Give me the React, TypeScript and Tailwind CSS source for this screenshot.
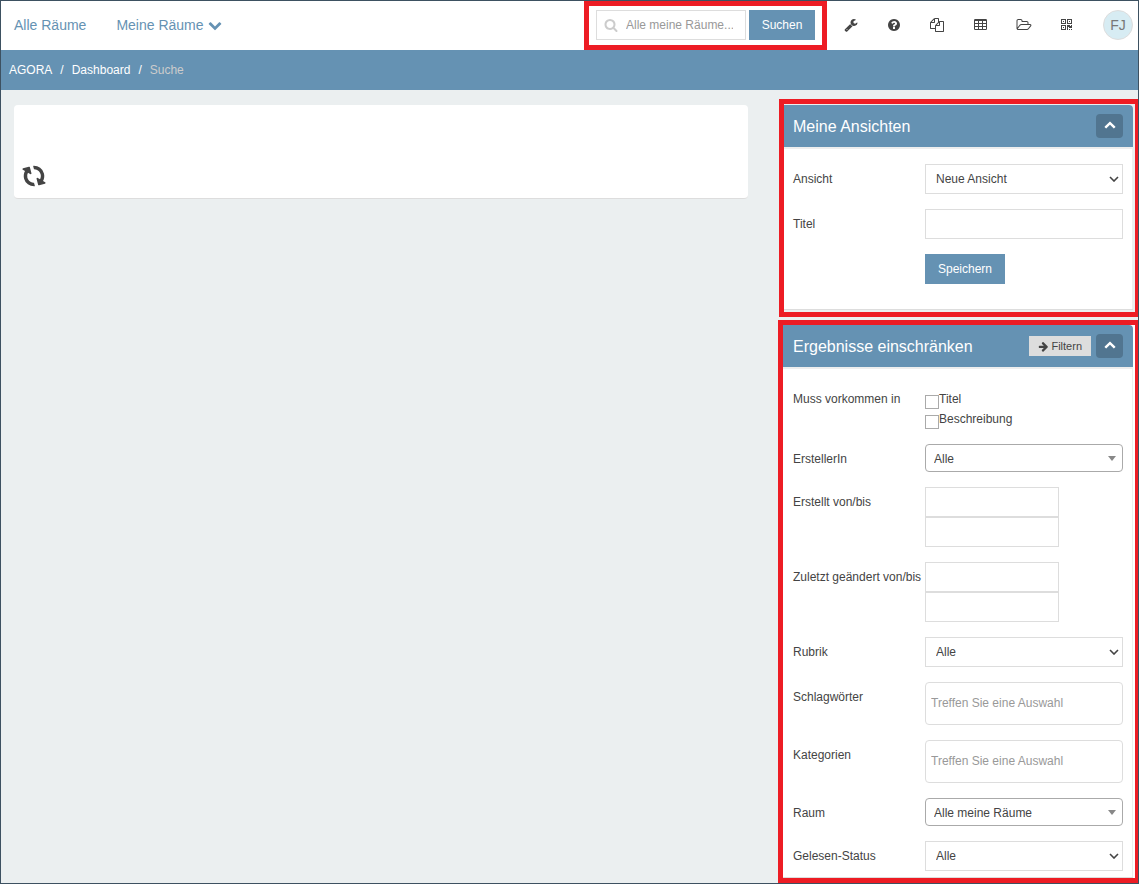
import type { ReactNode } from "react";

const ICONS = {
  search:
    "M1216 832q0-185-131.5-316.5t-316.5-131.5-316.5 131.5-131.5 316.5 131.5 316.5 316.5 131.5 316.5-131.5 131.5-316.5zm512 832q0 52-38 90t-90 38q-54 0-90-38l-343-342q-179 124-399 124-143 0-273.5-55.5t-225-150-150-225-55.5-273.5 55.5-273.5 150-225 225-150 273.5-55.5 273.5 55.5 225 150 150 225 55.5 273.5q0 220-124 399l343 343q37 37 37 90z",
  wrench:
    "M448 1472q0-26-19-45t-45-19-45 19-19 45 19 45 45 19 45-19 19-45zm644-420l-682 682q-37 37-90 37-52 0-91-37l-106-108q-38-36-38-90 0-53 38-91l681-681q39 98 114.5 173.5t173.5 114.5zm634-435q0 39-23 106-47 134-164.5 217.5t-258.5 83.5q-185 0-316.5-131.5t-131.5-316.5 131.5-316.5 316.5-131.5q58 0 121.5 16.5t107.5 46.5q16 11 16 28t-16 28l-293 169v224l193 107q5-3 79-48.5t135.5-81 70.5-35.5q15 0 23.5 10t8.5 25z",
  help: "M1024 1376v-192q0-14-9-23t-23-9h-192q-14 0-23 9t-9 23v192q0 14 9 23t23 9h192q14 0 23-9t9-23zm256-672q0-88-55.5-163t-138.5-116-170-41q-243 0-371 213-15 24 8 42l132 100q7 6 19 6 16 0 25-12 53-68 86-92 34-24 86-24 48 0 85.5 26t37.5 59q0 38-20 61t-68 45q-63 28-115.5 86.5t-52.5 125.5v36q0 14 9 23t23 9h192q14 0 23-9t9-23q0-19 21.5-49.5t54.5-49.5q32-18 49-28.5t46-35 44.5-48 28-60.5 12.5-81zm384 192q0 209-103 385.5t-279.5 279.5-385.5 103-385.5-103-279.5-279.5-103-385.5 103-385.5 279.5-279.5 385.5-103 385.5 103 279.5 279.5 103 385.5z",
  files:
    "M1696 384q40 0 68 28t28 68v1216q0 40-28 68t-68 28h-960q-40 0-68-28t-28-68v-288h-544q-40 0-68-28t-28-68v-672q0-40 20-88t48-76l408-408q28-28 76-48t88-20h416q40 0 68 28t28 68v328q68-40 128-40h416zm-544 213l-299 299h299v-299zm-640-384l-299 299h299v-299zm196 647l316-316v-416h-384v416q0 40-28 68t-68 28h-416v640h512v-256q0-40 20-88t48-76zm956 804v-1152h-384v416q0 40-28 68t-68 28h-416v640h896z",
  table:
    "M224 256H1568a160 160 0 0 1 160 160V1504a160 160 0 0 1-160 160H224a160 160 0 0 1-160-160V416a160 160 0 0 1 160-160zM192 512V768H576V512zM704 512V768H1088V512zM1216 512V768H1600V512zM192 896V1152H576V896zM704 896V1152H1088V896zM1216 896V1152H1600V896zM192 1280V1536H576V1280zM704 1280V1536H1088V1280zM1216 1280V1536H1600V1280z",
  folder:
    "M1845 931q0-35-53-35h-1088q-40 0-85.5 21.5t-71.5 52.5l-294 363q-18 24-18 40 0 35 53 35h1088q40 0 86-22t71-53l294-363q18-22 18-39zm-1141-163h768v-160q0-40-28-68t-68-28h-576q-40 0-68-28t-28-68v-64q0-40-28-68t-68-28h-320q-40 0-68 28t-28 68v853l256-315q44-53 116-87.5t140-34.5zm1269 163q0 62-46 120l-295 363q-43 53-116 87.5t-140 34.5h-1088q-92 0-158-66t-66-158v-960q0-92 66-158t158-66h320q92 0 158 66t66 158v32h544q92 0 158 66t66 158v160h192q54 0 99 24.5t67 70.5q15 32 15 68z",
  qrcode:
    "M192 192H832V832H192zM320 320V704H704V320zM448 448H576V576H448zM960 192H1600V832H960zM1088 320V704H1472V320zM1216 448H1344V576H1216zM192 960H832V1600H192zM320 1088V1472H704V1088zM448 1216H576V1344H448zM960 960H1344V1088H1472V960H1600V1344H1216V1216H1088V1600H960zM1216 1472H1344V1600H1216zM1472 1472H1600V1600H1472z",
  refresh:
    "M1639 1056q0 5-1 7-64 268-268 434.5t-478 166.5q-146 0-282.5-55t-243.5-157l-129 129q-19 19-45 19t-45-19-19-45v-448q0-26 19-45t45-19h448q26 0 45 19t19 45-19 45l-137 137q71 66 161 102t187 36q134 0 250-65t186-179q11-17 53-117 8-23 30-23h192q13 0 22.5 9.5t9.5 22.5zm25-800v448q0 26-19 45t-45 19h-448q-26 0-45-19t-19-45 19-45l138-138q-148-137-349-137-134 0-250 65t-186 179q-11 17-53 117-8 23-30 23h-199q-13 0-22.5-9.5t-9.5-22.5v-7q65-268 270-434.5t480-166.5q146 0 284 55.5t245 156.5l130-129q19-19 45-19t45 19 19 45z",
  chevron:
    "M1683 808l-742 741q-19 19-45 19t-45-19l-742-741q-19-19-19-45.5t19-45.5l166-165q19-19 45-19t45 19l531 531 531-531q19-19 45-19t45 19l166 165q19 19 19 45.5t-19 45.5z",
  arrowRight:
    "M1600 960q0 54-37 91l-651 651q-39 37-91 37-51 0-90-37l-75-75q-38-38-38-91t38-91l293-293h-704q-52 0-84.5-37.5t-32.5-90.5v-128q0-53 32.5-90.5t84.5-37.5h704l-293-294q-38-36-38-90t38-90l75-75q38-38 90-38 53 0 91 38l651 651q37 35 37 90z",
};

function Icon({
  name,
  className,
  viewBox = "0 0 1792 1792",
}: {
  name: keyof typeof ICONS;
  className: string;
  viewBox?: string;
}) {
  return (
    <svg viewBox={viewBox} className={className} fill="currentColor" fillRule="evenodd" aria-hidden="true">
      <path d={ICONS[name]} />
    </svg>
  );
}

function Header() {
  return (
    <header className="flex h-[49px] items-center bg-white pr-[5px]">
      <nav className="flex flex-1 items-center gap-[30px] pb-[2px] pl-[13px] text-sm text-[#6592b3]">
        <a href="#alle">Alle Räume</a>
        <a href="#meine" className="flex items-center gap-1">
          Meine Räume
          <Icon name="chevron" className="size-[14px]" />
        </a>
      </nav>
      <form className="flex items-start gap-[3px] self-stretch border-5 border-[#ed1c24] px-[7px] pt-1" onSubmit={(e) => e.preventDefault()}>
        <div className="flex h-[30px] w-[150px] items-center gap-2 border border-[#ddd] pl-[7px]">
          <Icon name="search" className="size-[14px] shrink-0 text-[#ccc]" />
          <input
            type="search"
            aria-label="Suche"
            placeholder="Alle meine Räume..."
            className="w-full min-w-0 text-xs outline-none placeholder:text-[#999]"
          />
        </div>
        <button className="h-[30px] min-w-[66px] bg-[#6592b3] px-3 text-xs text-white">Suchen</button>
      </form>
      <div className="ml-[17px] flex items-center pb-px text-[#444]">
        <div className="mr-7 flex gap-[29px]">
          <button aria-label="Einstellungen">
            <Icon name="wrench" className="size-[14px]" />
          </button>
          <button aria-label="Hilfe">
            <Icon name="help" className="size-[14px]" />
          </button>
          <button aria-label="Kopien">
            <Icon name="files" className="size-[14px]" />
          </button>
          <button aria-label="Tabelle">
            <Icon name="table" viewBox="-64 128 1792 1792" className="size-[14px]" />
          </button>
          <button aria-label="Ordner">
            <Icon name="folder" viewBox="0 0 2048 1792" className="h-[14px] w-4" />
          </button>
          <button aria-label="QR-Code">
            <Icon name="qrcode" viewBox="192 64 1792 1792" className="size-[14px]" />
          </button>
        </div>
        <button className="size-[30px] rounded-full border border-[#ddd] bg-[#d7ecf3] text-sm text-[#777]">FJ</button>
      </div>
    </header>
  );
}

function Panel({
  title,
  action,
  inset,
  children,
}: {
  title: string;
  action?: ReactNode;
  inset: string;
  children: ReactNode;
}) {
  return (
    <section className="rounded-t-sm border-b border-[#ddd] bg-white">
      <div className={`flex h-[42px] items-center gap-[5px] rounded-tr-sm bg-[#6592b3] pr-[10px] ${inset}`}>
        <h2 className="flex-1 pt-[2px] text-base text-white">{title}</h2>
        {action}
        <button aria-label="Einklappen" className="flex h-6 w-[27px] items-center justify-center rounded bg-[#517590] text-white">
          <Icon name="chevron" className="size-3 rotate-180" />
        </button>
      </div>
      <div className={`border-t-2 border-r border-[#eee] pr-[9px] ${inset}`}>{children}</div>
    </section>
  );
}

function Row({ label, id, children, labelClass = "pt-[5px]" }: { label: string; id?: string; children: ReactNode; labelClass?: string }) {
  return (
    <div className="flex">
      <div className={`w-[132px] shrink-0 whitespace-nowrap ${labelClass}`}>
        {id ? <label htmlFor={id}>{label}</label> : <span>{label}</span>}
      </div>
      <div className="min-w-0 flex-1">{children}</div>
    </div>
  );
}

function NativeSelect({ id, value }: { id: string; value: string }) {
  return (
    <div className="relative">
      <select id={id} className="block h-[30px] w-full appearance-none border border-[#ddd] bg-white pl-[10px]">
        <option>{value}</option>
      </select>
      <svg viewBox="0 0 10 6" className="pointer-events-none absolute top-3 right-1 h-[6px] w-[10px]" fill="none" stroke="#444" strokeWidth="1.6" aria-hidden="true">
        <path d="M1 1l4 4 4-4" />
      </svg>
    </div>
  );
}

function RoundedSelect({ id, value }: { id: string; value: string }) {
  return (
    <div className="relative">
      <select id={id} className="block h-7 w-full appearance-none rounded border border-[#aaa] bg-white pt-[2px] pl-2">
        <option>{value}</option>
      </select>
      <svg viewBox="0 0 8 5" className="pointer-events-none absolute top-3 right-[7px] h-[5px] w-2" fill="#888" aria-hidden="true">
        <path d="M0 0h8L4 5z" />
      </svg>
    </div>
  );
}

function Check({ label }: { label: string }) {
  return (
    <label className="flex h-5">
      <input type="checkbox" className="mt-[6px] size-[14px] appearance-none border border-[#aaa] bg-white checked:bg-[#6592b3]" />
      {label}
    </label>
  );
}

function DateRange({ id, label }: { id: string; label: string }) {
  return (
    <Row label={label} id={id}>
      <input id={id} className="block h-[30px] w-[134px] border border-[#ddd] px-1" />
      <input aria-label={`${label} (Ende)`} className="block h-[30px] w-[134px] border border-[#ddd] px-1" />
    </Row>
  );
}

function TagInput({ id, label }: { id: string; label: string }) {
  return (
    <Row label={label} id={id}>
      <input
        id={id}
        placeholder="Treffen Sie eine Auswahl"
        className="block h-[43px] w-full rounded border border-[#ddd] px-[5px] pb-[2px] placeholder:text-[#999]"
      />
    </Row>
  );
}

export default function App() {
  return (
    <div className="flex min-h-screen flex-col border border-[#3d5161] bg-[#ebeff0] font-['Liberation_Sans',Arial,sans-serif] text-xs leading-5 text-[#444]">
      <Header />
      <nav aria-label="Brotkrumen" className="flex h-10 items-center gap-2 bg-[#6592b3] pl-2 text-xs text-white">
        <a href="#agora">AGORA</a>
        <span>/</span>
        <a href="#dashboard">Dashboard</a>
        <span>/</span>
        <span className="text-[#ccc]">Suche</span>
      </nav>
      <div className="flex flex-1 items-start">
        <main className="mt-[15px] ml-[13px] flex h-[94px] flex-1 items-end rounded-sm border-b border-[#ddd] bg-white pb-[10px] pl-2">
          <Icon name="refresh" className="size-6 -rotate-105 text-[#444]" />
        </main>
        <aside className="ml-[30px] flex w-[360px] flex-col gap-[3px] self-stretch pt-[9px]">
          <div className="ml-px h-[218px] border-5 border-r-3 border-[#ed1c24] pt-px pr-[2px]">
            <Panel title="Meine Ansichten" inset="pl-[9px]">
              <div className="flex flex-col gap-[15px] pt-[15px] pb-[25px] text-xs leading-5">
                <Row label="Ansicht" id="ansicht">
                  <NativeSelect id="ansicht" value="Neue Ansicht" />
                </Row>
                <Row label="Titel" id="titel">
                  <input id="titel" className="block h-[30px] w-full border border-[#ddd] px-1" />
                </Row>
                <button className="ml-[132px] h-[30px] min-w-20 self-start bg-[#6592b3] px-3 text-white">Speichern</button>
              </div>
            </Panel>
          </div>
          <div className="flex-1 border-5 border-r-3 border-[#ed1c24] bg-white pr-[2px]">
            <Panel
              title="Ergebnisse einschränken"
              inset="pl-[10px]"
              action={
                <button className="flex h-5 items-center gap-[2px] bg-[#ddd] px-[9px] text-[11px] text-[#444]">
                  <Icon name="arrowRight" className="size-[11px]" />
                  Filtern
                </button>
              }
            >
              <div className="flex flex-col gap-[15px] pt-5 pb-[6px] text-xs leading-5">
                <Row label="Muss vorkommen in" labelClass="pt-0">
                  <Check label="Titel" />
                  <Check label="Beschreibung" />
                </Row>
                <Row label="ErstellerIn" id="ersteller">
                  <RoundedSelect id="ersteller" value="Alle" />
                </Row>
                <DateRange id="erstellt" label="Erstellt von/bis" />
                <DateRange id="geaendert" label="Zuletzt geändert von/bis" />
                <Row label="Rubrik" id="rubrik">
                  <NativeSelect id="rubrik" value="Alle" />
                </Row>
                <TagInput id="schlagwoerter" label="Schlagwörter" />
                <TagInput id="kategorien" label="Kategorien" />
                <Row label="Raum" id="raum">
                  <RoundedSelect id="raum" value="Alle meine Räume" />
                </Row>
                <Row label="Gelesen-Status" id="gelesen">
                  <NativeSelect id="gelesen" value="Alle" />
                </Row>
              </div>
            </Panel>
          </div>
        </aside>
      </div>
    </div>
  );
}
